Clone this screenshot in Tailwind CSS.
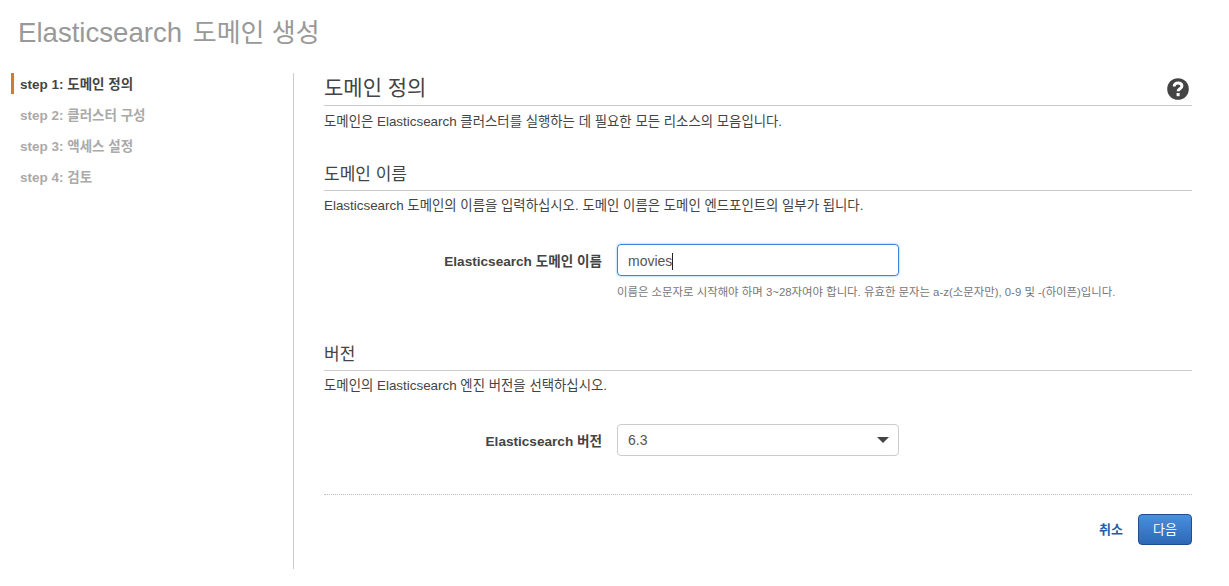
<!DOCTYPE html>
<html lang="ko">
<head>
    <meta charset="UTF-8">
    <title>Elasticsearch 도메인 생성</title>
    <script src="https://cdn.jsdelivr.net/npm/@tailwindcss/browser@4"></script>
</head>
<body class="bg-white h-[586px] overflow-hidden font-['Liberation_Sans','Noto_Sans_CJK_KR',sans-serif] text-[#444]">
    <h1 class="pl-[18px] pt-[15px] h-[73px] text-[27.6px] leading-[36px] text-[#999]">Elasticsearch <span class="ml-[3px] text-[26px]">도메인 생성</span></h1>

    <div class="flex h-[496px]">
        <!-- steps -->
        <nav class="w-[294px] shrink-0 border-r border-[#ccc] pl-[11px] text-[13.5px] font-bold text-[#aaa]">
            <div class="h-[21px] border-l-[3px] border-[#d27a2f] pl-[6px] leading-[23px] text-[#444]">step 1: 도메인 정의</div>
            <div class="pl-[9px] mt-[10px] h-[21px] leading-[23px]">step 2: 클러스터 구성</div>
            <div class="pl-[9px] mt-[10px] h-[21px] leading-[23px]">step 3: 액세스 설정</div>
            <div class="pl-[9px] mt-[10px] h-[21px] leading-[23px]">step 4: 검토</div>
        </nav>

        <main class="w-[868px] ml-[30px]">
            <div class="flex justify-between items-end h-[33px] border-b border-[#ccc] pb-[3px]">
                <h2 class="text-[21px] leading-[28px] text-[#444]">도메인 정의</h2>
                <svg class="w-[22px] h-[22px] mr-[3px] mb-[2px]" viewBox="0 0 22 22">
                    <circle cx="11" cy="11" r="10.8" fill="#444"/>
                    <path d="M7.2 8.4c0-2.1 1.6-3.5 3.9-3.5s3.8 1.3 3.8 3.1c0 2.7-3.8 2.6-3.8 5.2" fill="none" stroke="#fff" stroke-width="3"/>
                    <rect x="9.6" y="15" width="3" height="3.2" fill="#fff"/>
                </svg>
            </div>
            <p class="mt-[7px] text-[13.4px] leading-[18px]">도메인은 Elasticsearch 클러스터를 실행하는 데 필요한 모든 리소스의 모음입니다.</p>

            <h3 class="mt-[31px] h-[28px] border-b border-[#ccc] text-[17px] leading-[26px] box-content pb-0">도메인 이름</h3>
            <p class="mt-[6px] text-[13.4px] leading-[18px]">Elasticsearch 도메인의 이름을 입력하십시오. 도메인 이름은 도메인 엔드포인트의 일부가 됩니다.</p>

            <div class="flex mt-[29px]">
                <label class="w-[278px] text-right text-[13.6px] font-bold leading-[36px]">Elasticsearch 도메인 이름</label>
                <div class="ml-[15px]">
                    <div class="w-[282px] h-[32px] border border-[#3b86dc] rounded-[4px] shadow-[0_0_2px_#5b9fe8] px-[10px] pt-[2px] text-[14px] leading-[28px] text-[#555] flex items-center">movies<span class="w-px h-[17px] bg-[#222]"></span></div>
                    <p class="mt-[9px] text-[11.4px] leading-[14px] text-[#777] whitespace-nowrap">이름은 소문자로 시작해야 하며 3~28자여야 합니다. 유효한 문자는 a-z(소문자만), 0-9 및 -(하이픈)입니다.</p>
                </div>
            </div>

            <h3 class="mt-[43px] h-[28px] border-b border-[#ccc] text-[17px] leading-[26px] box-content">버전</h3>
            <p class="mt-[6px] text-[13.4px] leading-[18px]">도메인의 Elasticsearch 엔진 버전을 선택하십시오.</p>

            <div class="flex mt-[29px]">
                <label class="w-[278px] text-right text-[13.6px] font-bold leading-[36px]">Elasticsearch 버전</label>
                <div class="ml-[15px] w-[282px] h-[32px] border border-[#ccc] rounded-[4px] pl-[10px] pr-[9px] text-[14px] text-[#555] flex items-center justify-between">
                    <span>6.3</span>
                    <span class="w-0 h-0 border-x-[6px] border-x-transparent border-t-[6px] border-t-[#444]"></span>
                </div>
            </div>

            <div class="mt-[34px] border-t border-dotted border-[#bbb] flex justify-end items-center pt-[19px]">
                <a class="text-[13px] font-bold text-[#1f5fa8] mr-[15px]">취소</a>
                <button class="w-[54px] h-[31px] rounded-[4px] border border-[#1d4f91] bg-gradient-to-b from-[#4a8fe0] to-[#2d68b4] text-white text-[13px]">다음</button>
            </div>
        </main>
    </div>
</body>
</html>
